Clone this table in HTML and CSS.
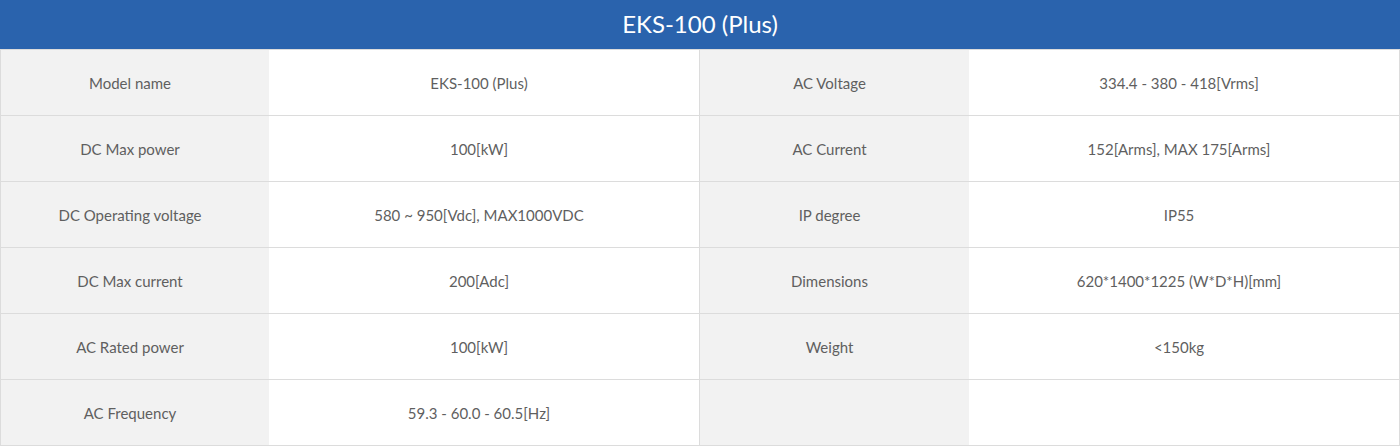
FILE: index.html
```html
<!DOCTYPE html>
<html lang="en">
<head>
<meta charset="utf-8">
<title>EKS-100 (Plus)</title>
<link rel="stylesheet" href="styles.css">
</head>
<body>
<div class="spec">
  <div class="spec-title">EKS-100 (Plus)</div>
  <div class="spec-body">
    <div class="row">
      <div class="cell label">Model name</div><div class="cell value">EKS-100 (Plus)</div>
      <div class="cell label split">AC Voltage</div><div class="cell value">334.4 - 380 - 418[Vrms]</div>
    </div>
    <div class="row">
      <div class="cell label">DC Max power</div><div class="cell value">100[kW]</div>
      <div class="cell label split">AC Current</div><div class="cell value">152[Arms], MAX 175[Arms]</div>
    </div>
    <div class="row">
      <div class="cell label">DC Operating voltage</div><div class="cell value">580 ~ 950[Vdc], MAX1000VDC</div>
      <div class="cell label split">IP degree</div><div class="cell value">IP55</div>
    </div>
    <div class="row">
      <div class="cell label">DC Max current</div><div class="cell value">200[Adc]</div>
      <div class="cell label split">Dimensions</div><div class="cell value">620*1400*1225 (W*D*H)[mm]</div>
    </div>
    <div class="row">
      <div class="cell label">AC Rated power</div><div class="cell value">100[kW]</div>
      <div class="cell label split">Weight</div><div class="cell value">&lt;150kg</div>
    </div>
    <div class="row">
      <div class="cell label">AC Frequency</div><div class="cell value">59.3 - 60.0 - 60.5[Hz]</div>
      <div class="cell label split"></div><div class="cell value"></div>
    </div>
  </div>
</div>
</body>
</html>
```
FILE: styles.css
```css
* { box-sizing: border-box; }
html, body { margin: 0; padding: 0; background: #fff; }
body { font-family: Lato, "Noto Sans", sans-serif; color: #5f5f5f; }

.spec { width: 1400px; }

.spec-title {
  height: 49px;
  background: #2a63ad;
  color: #fff;
  font-size: 24px;
  display: flex;
  align-items: center;
  justify-content: center;
  padding-bottom: 3px;
}

.spec-body {
  border: 1px solid #dcdcdc;
  border-bottom: none;
}

.row {
  display: grid;
  grid-template-columns: 268px 430px 270px 430px;
  height: 66px;
  border-bottom: 1px solid #dcdcdc;
}

.cell {
  display: flex;
  align-items: center;
  justify-content: center;
  font-size: 15px;
  padding: 0 10px 0 0;
}

.label { background: #f2f2f2; }
.value { background: #fff; }
.split { border-left: 1px solid #dcdcdc; }
```
